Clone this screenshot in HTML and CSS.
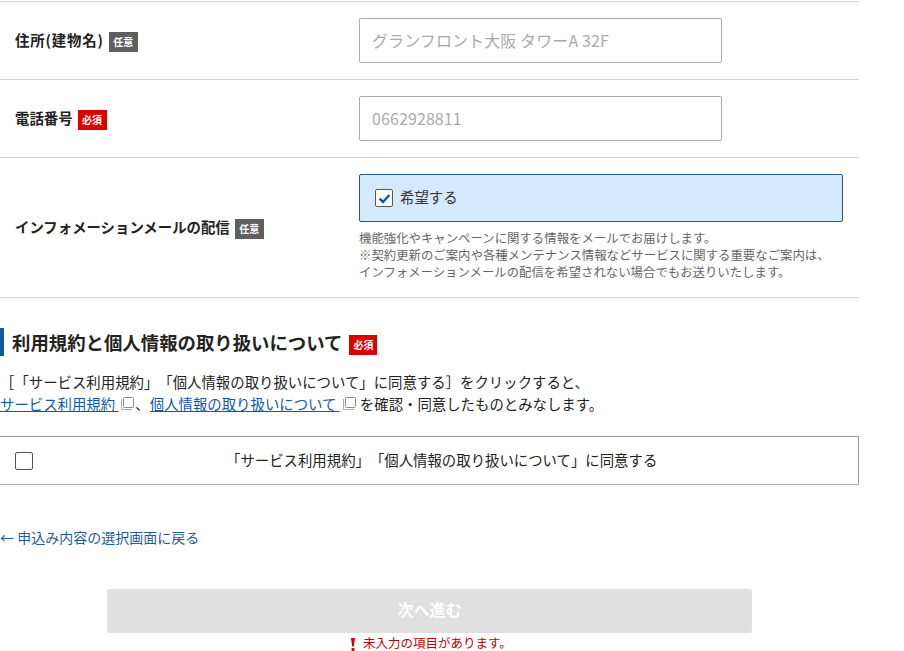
FILE: index.html
```html
<!DOCTYPE html>
<html lang="ja">
<head>
<meta charset="utf-8">
<title>お申込みフォーム</title>
<link rel="stylesheet" href="styles.css">
</head>
<body>
<main class="page">
  <div class="row first">
    <div class="label"><span class="label-text wide">住所(建物名)</span><span class="tag opt">任意</span></div>
    <div class="field"><input class="text" type="text" placeholder="グランフロント大阪 タワーA 32F"></div>
  </div>
  <div class="row">
    <div class="label"><span class="label-text">電話番号</span><span class="tag req">必須</span></div>
    <div class="field"><input class="text" type="text" placeholder="0662928811"></div>
  </div>
  <div class="row">
    <div class="label"><span class="label-text">インフォメーションメールの配信</span><span class="tag opt">任意</span></div>
    <div class="field">
      <label class="choice">
        <span class="box checked"><svg viewBox="0 0 18 18" width="15" height="15"><path d="M3.2 9.2 7.2 13.2 14.8 4.8" fill="none" stroke="#0f5aa5" stroke-width="3"/></svg></span>
        <span class="choice-text">希望する</span>
      </label>
      <p class="note">機能強化やキャンペーンに関する情報をメールでお届けします。<br>※契約更新のご案内や各種メンテナンス情報などサービスに関する重要なご案内は、<br>インフォメーションメールの配信を希望されない場合でもお送りいたします。</p>
    </div>
  </div>

  <h2 class="heading"><span>利用規約と個人情報の取り扱いについて</span><span class="tag req">必須</span></h2>
  <p class="lead">［「サービス利用規約」「個人情報の取り扱いについて」に同意する］をクリックすると、<br><a href="#">サービス利用規約 </a><svg class="ext" viewBox="0 0 14 14" width="14" height="14"><path d="M1.5 2v10.5H12" fill="none" stroke="#aaa"/><rect x="3.5" y="0.5" width="10" height="10" rx="1" fill="none" stroke="#888"/></svg>、<a href="#">個人情報の取り扱いについて </a><svg class="ext" viewBox="0 0 14 14" width="14" height="14"><path d="M1.5 2v10.5H12" fill="none" stroke="#aaa"/><rect x="3.5" y="0.5" width="10" height="10" rx="1" fill="none" stroke="#888"/></svg> を確認・同意したものとみなします。</p>

  <label class="agree">
    <span class="box"></span>
    <span class="agree-text">「サービス利用規約」「個人情報の取り扱いについて」に同意する</span>
  </label>

  <p class="back"><a href="#">← 申込み内容の選択画面に戻る</a></p>

  <div class="actions">
    <button class="next" type="button" disabled>次へ進む</button>
    <p class="error"><svg class="bang" viewBox="0 0 6 13" width="6" height="13"><path d="M1 0h4L3.8 8.5H2.2z M1.6 10h2.8v3H1.6z" fill="#d40000"/></svg>未入力の項目があります。</p>
  </div>
</main>
</body>
</html>
```
FILE: styles.css
```css
* { box-sizing: border-box; }
html, body { margin: 0; padding: 0; height: 100%; overflow: hidden; background: #fff; }
body { font-family: "Noto Sans CJK JP", "Noto Sans", sans-serif; color: #222; font-size: 14px; text-spacing-trim: space-all; }
a { color: #0f5aa5; }
.page { width: 859px; padding-top: 1px; }
.row { display: flex; align-items: center; padding: 16px 0; border-bottom: 1px solid #d4d4d4; }
.row.first { border-top: 1px solid #d4d4d4; }
.label { width: 359px; padding-left: 15px; display: flex; align-items: center; gap: 5px; font-size: 14.4px; font-weight: 700; color: #222; line-height: 20px; }
.label-text { padding-bottom: 2px; }
.label .tag { margin-top: 2px; }
.wide { letter-spacing: 0.85px; }
.tag { display: inline-flex; align-items: center; justify-content: center; width: 29px; height: 20px; font-size: 10px; font-weight: 700; color: #fff; line-height: 1; }
.tag.opt { background: #5f5f5f; }
.tag.req { background: #dd0000; }
.field { flex: 1; }
.text { display: block; width: 363px; height: 45px; padding: 0 12px 2px; border: 1px solid #aaa; border-radius: 2px; font: 400 16px "Noto Sans CJK JP", "Noto Sans", sans-serif; letter-spacing: 0.1px; background: #fff; }
.text::placeholder { color: #aaa; opacity: 1; }
.choice { display: flex; align-items: center; gap: 7px; width: 484px; height: 48px; padding: 0 15px; background: #d5e9fc; border: 1px solid #1f5c96; border-radius: 2px; font-size: 14.4px; color: #333; }
.choice-text { padding-bottom: 4px; }
.box { display: inline-flex; align-items: center; justify-content: center; flex: none; width: 18px; height: 18px; background: #fff; border: 1px solid #555; border-radius: 2px; }
.note { margin: 8px 0 0; font-size: 12.4px; line-height: 17px; color: #666; }
.heading { display: flex; align-items: center; gap: 7px; margin: 30px 0 0; height: 28px; padding-left: 8px; border-left: 4px solid #0f5aa5; font-size: 18.4px; font-weight: 700; line-height: 28px; color: #222; }
.heading .tag { margin-top: 6px; width: 28px; }
.lead { margin: 15px 0 0; font-size: 14.4px; line-height: 22px; color: #222; }
.ext { vertical-align: -1px; margin: 0 1px 0 2px; }
.agree { display: flex; align-items: center; height: 49px; margin-top: 21px; padding-left: 15px; border: 1px solid #999; border-left: 0; border-bottom-color: #aaa; font-size: 14.4px; }
.agree-text { flex: 1; padding-left: 193px; padding-bottom: 2px; }
.back { margin: 40px 0 0; font-size: 14px; line-height: 24px; }
.back a { text-decoration: none; color: #1f5c96; }
.actions { display: flex; flex-direction: column; align-items: center; margin-top: 40px; width: 859px; }
.next { display: block; width: 645px; height: 44px; border: 0; border-radius: 3px; background: #e0e0e0; color: #fff; padding-bottom: 6px; font: 700 16px "Noto Sans CJK JP", "Noto Sans", sans-serif; }
.error { display: flex; align-items: center; gap: 7px; margin: 1px 0 0; padding-left: 3px; font-size: 12.5px; line-height: 18px; color: #c00000; }
.bang { flex: none; margin-top: 3px; }
```
